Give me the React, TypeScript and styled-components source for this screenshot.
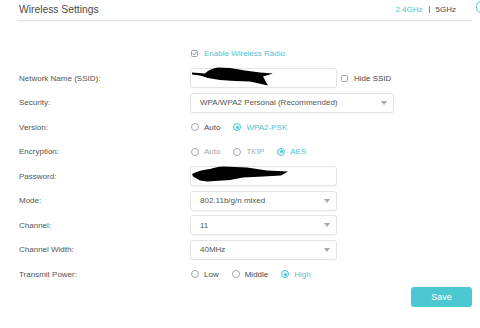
import React from "react";
import styled, { createGlobalStyle } from "styled-components";

const teal = "#4ac6d2";

const GlobalStyle = createGlobalStyle`
  html, body {
    margin: 0;
    background: #fff;
    overflow: hidden;
  }
  body {
    font-family: "Liberation Sans", Arial, sans-serif;
    color: #555;
  }
`;

const Page = styled.div`
  width: 480px;
  height: 328px;
  padding-left: 17px;
  box-sizing: border-box;
`;

const TopRow = styled.div`
  display: flex;
  align-items: flex-start;
`;

const Header = styled.header`
  align-items: center;
  border-bottom: 1px solid #e2e2e2;
  box-shadow: 0 1px 1px rgba(0, 0, 0, 0.04);
  box-sizing: border-box;
  display: flex;
  flex-shrink: 0;
  height: 21px;
  padding: 0 16px 1px 2px;
  width: 455px;
`;

const Title = styled.h1`
  color: #4a4a4a;
  flex-grow: 1;
  font-size: 10.3px;
  font-weight: normal;
  margin: 0;
`;

const Bands = styled.div`
  align-items: center;
  color: #4a4a4a;
  display: flex;
  font-size: 8px;
`;

const Band = styled.span<{ $active?: boolean }>`
  color: ${(p) => (p.$active ? teal : "#4a4a4a")};
`;

const Divider = styled.span`
  background: #888;
  height: 7px;
  margin: 0 6px;
  width: 1px;
`;

const HelpIcon = styled.span`
  border: 1.5px solid ${teal};
  border-radius: 50%;
  flex-shrink: 0;
  height: 12px;
  margin: 0 0 0 4px;
  width: 12px;
`;

const Form = styled.div`
  display: grid;
  grid-template-columns: 171px 1fr;
  grid-auto-rows: 20px;
  row-gap: 4.5px;
  margin-top: 22.5px;
  padding-left: 2px;
`;

const Label = styled.div`
  align-items: center;
  color: #555;
  display: flex;
  font-size: 8px;
`;

const Control = styled.div`
  align-items: center;
  display: flex;
`;

const Field = styled.div<{ $width: number }>`
  align-items: center;
  background: #fff;
  border: 1px solid #e4e4e4;
  border-radius: 3px;
  box-shadow: 0 1px 1px rgba(0, 0, 0, 0.03);
  box-sizing: border-box;
  color: #555;
  display: flex;
  font-size: 8px;
  height: 20px;
  padding: 0 6px 0 9px;
  width: ${(p) => p.$width}px;
`;

const FieldText = styled.span`
  flex-grow: 1;
`;

const Redaction = styled.svg`
  margin-left: -9px;
  margin-top: -2px;
`;

const Arrow = styled.svg`
  flex-shrink: 0;
`;

const Box = styled.span`
  border: 1px solid #9aa4a6;
  border-radius: 1.5px;
  box-sizing: border-box;
  display: inline-flex;
  height: 7px;
  width: 7px;
  align-items: center;
  justify-content: center;
  margin-right: 6px;
`;

const CheckLabel = styled.span<{ $teal?: boolean }>`
  color: ${(p) => (p.$teal ? teal : "#4a4a4a")};
  font-size: 8px;
`;

const CheckWrap = styled.label<{ $gap?: number }>`
  align-items: center;
  display: flex;
  margin-left: ${(p) => p.$gap ?? 0}px;
`;

const RadioGroup = styled.div`
  align-items: center;
  display: flex;
  padding-left: 1px;
`;

const RadioItem = styled.label`
  align-items: center;
  display: flex;
  margin-right: 13px;
`;

const Circle = styled.span<{ $checked?: boolean }>`
  align-items: center;
  background: ${(p) => (p.$checked ? "#e6f7f9" : "#fff")};
  border: 1px solid ${(p) => (p.$checked ? teal : "#a8a8a8")};
  border-radius: 50%;
  box-sizing: border-box;
  display: inline-flex;
  height: 8px;
  justify-content: center;
  margin-right: 5px;
  width: 8px;
  &::after {
    content: "";
    display: ${(p) => (p.$checked ? "block" : "none")};
    width: 3px;
    height: 3px;
    border-radius: 50%;
    background: ${teal};
  }
`;

const RadioText = styled.span<{ $state: "on" | "off" | "disabled" }>`
  color: ${(p) =>
    p.$state === "on" ? teal : p.$state === "disabled" ? "#a6a6a6" : "#4a4a4a"};
  font-size: 8px;
`;

const Footer = styled.div`
  display: flex;
  justify-content: flex-end;
  margin-top: 3px;
  width: 455px;
`;

const SaveButton = styled.button`
  background: #4cc8d3;
  border: none;
  border-radius: 3px;
  color: #fff;
  font-family: "Liberation Sans", Arial, sans-serif;
  font-size: 9px;
  height: 20px;
  padding: 0;
  width: 61px;
`;

const DownArrow = () => (
  <Arrow width="6" height="4" viewBox="0 0 6 4">
    <path d="M0 0 L6 0 L3 4 Z" fill="#a9a9a9" />
  </Arrow>
);

interface SelectProps {
  value: string;
  width: number;
}
const Select: React.FC<SelectProps> = ({ value, width }) => (
  <Field $width={width}>
    <FieldText>{value}</FieldText>
    <DownArrow />
  </Field>
);

interface RadioOption {
  text: string;
  state: "on" | "off" | "disabled";
}
const Radios: React.FC<{ options: RadioOption[] }> = ({ options }) => (
  <RadioGroup>
    {options.map((o) => (
      <RadioItem key={o.text}>
        <Circle $checked={o.state === "on"} />
        <RadioText $state={o.state}>{o.text}</RadioText>
      </RadioItem>
    ))}
  </RadioGroup>
);

const CheckMark = () => (
  <svg width="5" height="5" viewBox="0 0 5 5">
    <path d="M0.6 2.6 L2 3.9 L4.4 1" fill="none" stroke="#5d8d92" strokeWidth="0.9" />
  </svg>
);

const App: React.FC = () => {
  return (
    <Page>
      <GlobalStyle />
      <TopRow>
        <Header>
          <Title>Wireless Settings</Title>
          <Bands>
            <Band $active>2.4GHz</Band>
            <Divider />
            <Band>5GHz</Band>
          </Bands>
        </Header>
        <HelpIcon />
      </TopRow>

      <Form>
        <Label />
        <Control>
          <CheckWrap $gap={1}>
            <Box>
              <CheckMark />
            </Box>
            <CheckLabel $teal>Enable Wireless Radio</CheckLabel>
          </CheckWrap>
        </Control>

        <Label>Network Name (SSID):</Label>
        <Control>
          <Field $width={147}>
            <Redaction width="90" height="20" viewBox="0 -1 90 20">
              <path
                d="M1 4.5 L14 5.5 C17 2 22 0 27 -0.5 L39 0 L54 2.5 L69 4.5 L82 5.5 L72 8.5 L77 17.5 L59 13.5 L44 13 L29 12 L17 10 L9 7.5 L1 6.5 Z"
                fill="#000"
              />
            </Redaction>
          </Field>
          <CheckWrap $gap={4}>
            <Box />
            <CheckLabel>Hide SSID</CheckLabel>
          </CheckWrap>
        </Control>

        <Label>Security:</Label>
        <Control>
          <Select value="WPA/WPA2 Personal (Recommended)" width={204} />
        </Control>

        <Label>Version:</Label>
        <Control>
          <Radios
            options={[
              { text: "Auto", state: "off" },
              { text: "WPA2-PSK", state: "on" },
            ]}
          />
        </Control>

        <Label>Encryption:</Label>
        <Control>
          <Radios
            options={[
              { text: "Auto", state: "disabled" },
              { text: "TKIP", state: "disabled" },
              { text: "AES", state: "on" },
            ]}
          />
        </Control>

        <Label>Password:</Label>
        <Control>
          <Field $width={147}>
            <Redaction width="100" height="20" viewBox="0 -1 100 20">
              <path
                d="M1 8 C6 5.5 12 3.5 19 3 C24 1.5 28 0.5 32 0.5 L56 1.5 L76 4.5 L97 5.5 L90 9.5 L72 10.5 L52 11.5 L39 14 L16 15.5 L9 14.5 L2 10.5 Z"
                fill="#000"
              />
            </Redaction>
          </Field>
        </Control>

        <Label>Mode:</Label>
        <Control>
          <Select value="802.11b/g/n mixed" width={147} />
        </Control>

        <Label>Channel:</Label>
        <Control>
          <Select value="11" width={147} />
        </Control>

        <Label>Channel Width:</Label>
        <Control>
          <Select value="40MHz" width={147} />
        </Control>

        <Label>Transmit Power:</Label>
        <Control>
          <Radios
            options={[
              { text: "Low", state: "off" },
              { text: "Middle", state: "off" },
              { text: "High", state: "on" },
            ]}
          />
        </Control>
      </Form>

      <Footer>
        <SaveButton>Save</SaveButton>
      </Footer>
    </Page>
  );
};

export default App;
